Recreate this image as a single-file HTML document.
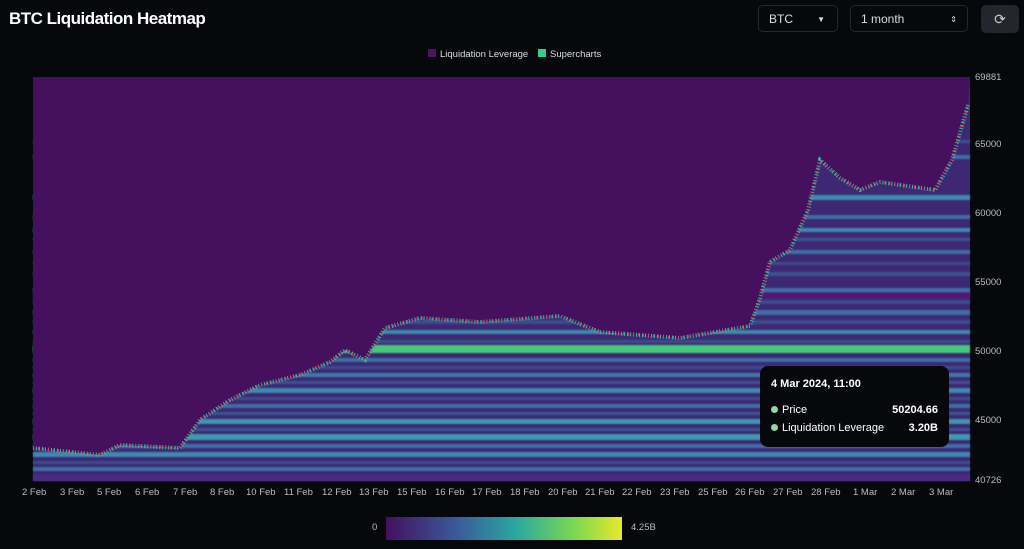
<!DOCTYPE html>
<html><head><meta charset="utf-8"><style>
body{margin:0;width:1024px;height:549px;background:#06080c;font-family:"Liberation Sans",sans-serif;color:#fff;overflow:hidden;position:relative}
.t{position:absolute;left:9px;top:9px;font-size:17px;font-weight:bold;letter-spacing:-0.5px}
.sel{position:absolute;top:5px;height:27px;border:1px solid #24272d;border-radius:5px;font-size:12px;line-height:27px;padding-left:10px;box-sizing:border-box;color:#ddd}
.btn{position:absolute;left:981px;top:5px;width:38px;height:28px;background:#23262c;border-radius:5px;text-align:center;line-height:28px;font-size:14px;color:#ccc}
.lg{position:absolute;top:49px;font-size:9.5px;color:#ddd}
.ax{position:absolute;font-size:9.5px;color:#bbb}
.tip{position:absolute;left:760px;top:366px;width:189px;height:81px;background:#07080b;border-radius:8px;font-size:11px}
</style></head><body>
<div class="t">BTC Liquidation Heatmap</div>
<div class="sel" style="left:758px;width:80px">BTC<span style="position:absolute;right:12px;font-size:8px">▼</span></div>
<div class="sel" style="left:850px;width:118px">1 month<span style="position:absolute;right:10px;font-size:8px">⇕</span></div>
<div class="btn">⟳</div>
<div class="lg" style="left:428px"><span style="display:inline-block;width:8px;height:8px;background:#4a1464;margin-right:4px"></span>Liquidation Leverage</div>
<div class="lg" style="left:538px"><span style="display:inline-block;width:8px;height:8px;background:#2bd08a;margin-right:4px"></span>Supercharts</div>
<svg style="position:absolute;left:0;top:0" width="1024" height="549">
<defs><linearGradient id="cb"><stop offset="0" stop-color="#44105e"/><stop offset=".3" stop-color="#3a5a9a"/><stop offset=".55" stop-color="#2aa7a0"/><stop offset=".8" stop-color="#7cd850"/><stop offset="1" stop-color="#e8e82a"/></linearGradient>
<filter id="bl"><feGaussianBlur stdDeviation="0.8"/></filter></defs>
<rect x="33" y="77" width="937" height="404" fill="#3e2874"/>
<g filter="url(#bl)">
<rect x="33" y="290" width="937" height="8" fill="#55197a"/>
<rect x="33" y="300" width="937" height="4" fill="#3b4d8e"/>
<rect x="33" y="310" width="937" height="5" fill="#3d6ea6"/>
<rect x="33" y="320" width="937" height="4" fill="#3b4d8e"/>
<rect x="33" y="330" width="937" height="4" fill="#3e8aae"/>
<rect x="33" y="340" width="937" height="3" fill="#3b4d8e"/>
<rect x="33" y="345" width="937" height="8" fill="#44c87a"/>
<rect x="33" y="358" width="937" height="4" fill="#3b6fa0"/>
<rect x="33" y="366" width="937" height="3" fill="#3b4d8e"/>
<rect x="33" y="373" width="937" height="4" fill="#3d7aa8"/>
<rect x="33" y="381" width="937" height="3" fill="#3b5290"/>
<rect x="33" y="388" width="937" height="5" fill="#3e8aae"/>
<rect x="33" y="397" width="937" height="3" fill="#3b4d8e"/>
<rect x="33" y="404" width="937" height="4" fill="#3d6ea6"/>
<rect x="33" y="412" width="937" height="3" fill="#3b5290"/>
<rect x="33" y="419" width="937" height="5" fill="#3e96ae"/>
<rect x="33" y="428" width="937" height="3" fill="#3b5290"/>
<rect x="33" y="434" width="937" height="6" fill="#3e9aae"/>
<rect x="33" y="444" width="937" height="4" fill="#3d6ea6"/>
<rect x="33" y="452" width="937" height="5" fill="#3e8aae"/>
<rect x="33" y="461" width="937" height="3" fill="#3b4d8e"/>
<rect x="33" y="467" width="937" height="4" fill="#3d6ea6"/>
<rect x="33" y="474" width="937" height="7" fill="#4a2a80"/>
<rect x="33" y="140" width="937" height="3" fill="#3b5290"/>
<rect x="33" y="155" width="937" height="4" fill="#3d6ea6"/>
<rect x="33" y="195" width="937" height="5" fill="#3e8aae"/>
<rect x="33" y="215" width="937" height="4" fill="#3d6ea6"/>
<rect x="33" y="228" width="937" height="4" fill="#3e8aae"/>
<rect x="33" y="238" width="937" height="3" fill="#3b5290"/>
<rect x="33" y="250" width="937" height="4" fill="#3d6ea6"/>
<rect x="33" y="262" width="937" height="3" fill="#3b4d8e"/>
<rect x="33" y="272" width="937" height="4" fill="#3b5290"/>
<rect x="33" y="288" width="937" height="4" fill="#3d6ea6"/>
</g>
<path d="M33,77 L33,448 L100,455 L120,445 L180,448 L200,420 L230,400 L260,385 L300,375 L330,362 L345,350 L365,360 L385,328 L420,318 L480,322 L560,316 L600,332 L680,338 L750,326 L760,298 L770,262 L790,250 L808,210 L820,160 L840,178 L860,190 L880,182 L935,190 L952,160 L968,105 L970,77 Z" fill="#45105e"/>
<path d="M33,448 L100,455 L120,445 L180,448 L200,420 L230,400 L260,385 L300,375 L330,362 L345,350 L365,360 L385,328 L420,318 L480,322 L560,316 L600,332 L680,338 L750,326 L760,298 L770,262 L790,250 L808,210 L820,160 L840,178 L860,190 L880,182 L935,190 L952,160 L968,105" fill="none" stroke="#2bc0a0" stroke-width="4" stroke-dasharray="1 2"/>
<path d="M33,448 L100,455 L120,445 L180,448 L200,420 L230,400 L260,385 L300,375 L330,362 L345,350 L365,360 L385,328 L420,318 L480,322 L560,316 L600,332 L680,338 L750,326 L760,298 L770,262 L790,250 L808,210 L820,160 L840,178 L860,190 L880,182 L935,190 L952,160 L968,105" fill="none" stroke="#e0405a" stroke-width="3" stroke-dasharray="1 4"/>
<rect x="386" y="517" width="236" height="23" fill="url(#cb)"/>
</svg>
<div class="ax" style="left:372px;top:522px">0</div>
<div class="ax" style="left:631px;top:522px">4.25B</div>
<div class="ax" style="left:975px;top:72px">69881</div>
<div class="ax" style="left:975px;top:139px">65000</div>
<div class="ax" style="left:975px;top:208px">60000</div>
<div class="ax" style="left:975px;top:277px">55000</div>
<div class="ax" style="left:975px;top:346px">50000</div>
<div class="ax" style="left:975px;top:415px">45000</div>
<div class="ax" style="left:975px;top:475px">40726</div>
<div class="ax" style="top:487px;left:22px;word-spacing:0;white-space:nowrap">
<span style="position:absolute;left:0">2 Feb</span><span style="position:absolute;left:38px">3 Feb</span><span style="position:absolute;left:75px">5 Feb</span><span style="position:absolute;left:113px">6 Feb</span><span style="position:absolute;left:151px">7 Feb</span><span style="position:absolute;left:188px">8 Feb</span><span style="position:absolute;left:224px">10 Feb</span><span style="position:absolute;left:262px">11 Feb</span><span style="position:absolute;left:300px">12 Feb</span><span style="position:absolute;left:337px">13 Feb</span><span style="position:absolute;left:375px">15 Feb</span><span style="position:absolute;left:413px">16 Feb</span><span style="position:absolute;left:450px">17 Feb</span><span style="position:absolute;left:488px">18 Feb</span><span style="position:absolute;left:526px">20 Feb</span><span style="position:absolute;left:563px">21 Feb</span><span style="position:absolute;left:600px">22 Feb</span><span style="position:absolute;left:638px">23 Feb</span><span style="position:absolute;left:676px">25 Feb</span><span style="position:absolute;left:713px">26 Feb</span><span style="position:absolute;left:751px">27 Feb</span><span style="position:absolute;left:789px">28 Feb</span><span style="position:absolute;left:831px">1 Mar</span><span style="position:absolute;left:869px">2 Mar</span><span style="position:absolute;left:907px">3 Mar</span></div>
<div class="tip">
<div style="position:absolute;left:11px;top:12px;font-weight:bold">4 Mar 2024, 11:00</div>
<div style="position:absolute;left:11px;top:38px"><span style="display:inline-block;width:7px;height:7px;border-radius:50%;background:#8fd6a0;margin-right:4px"></span>Price</div>
<div style="position:absolute;right:11px;top:38px;font-weight:bold">50204.66</div>
<div style="position:absolute;left:11px;top:56px"><span style="display:inline-block;width:7px;height:7px;border-radius:50%;background:#8fd6a0;margin-right:4px"></span>Liquidation Leverage</div>
<div style="position:absolute;right:11px;top:56px;font-weight:bold">3.20B</div>
</div>
</body></html>
